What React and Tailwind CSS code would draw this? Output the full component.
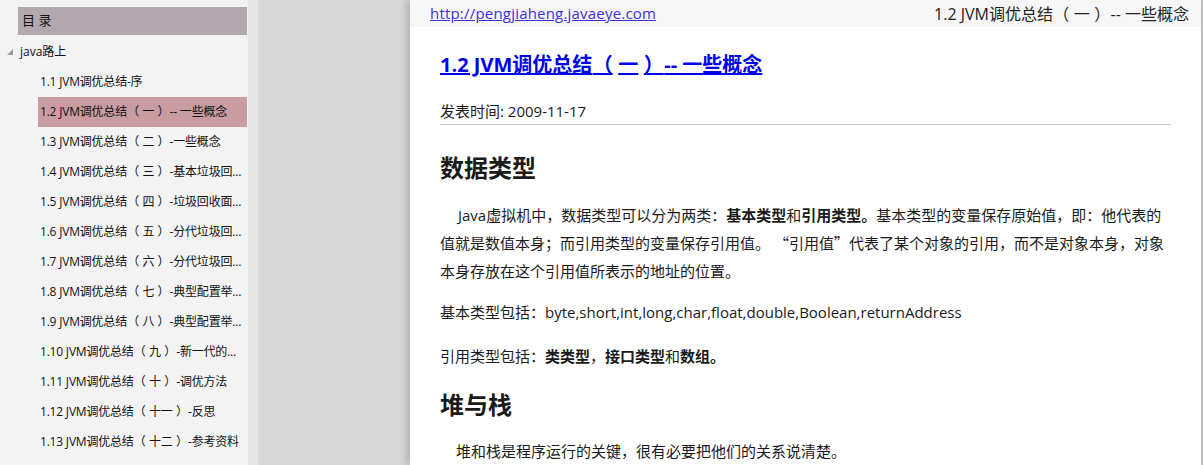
import React from "react";

const items = [
  "1.1 JVM调优总结-序",
  "1.2 JVM调优总结（一）-- 一些概念",
  "1.3 JVM调优总结（二）-一些概念",
  "1.4 JVM调优总结（三）-基本垃圾回...",
  "1.5 JVM调优总结（四）-垃圾回收面...",
  "1.6 JVM调优总结（五）-分代垃圾回...",
  "1.7 JVM调优总结（六）-分代垃圾回...",
  "1.8 JVM调优总结（七）-典型配置举...",
  "1.9 JVM调优总结（八）-典型配置举...",
  "1.10 JVM调优总结（九）-新一代的...",
  "1.11 JVM调优总结（十）-调优方法",
  "1.12 JVM调优总结（十一）-反思",
  "1.13 JVM调优总结（十二）-参考资料",
];

const font = { fontFamily: '"Open Sans", "Noto Sans CJK SC", sans-serif' };

function Cjk({ text }) {
  const parts = text.split(/([（）])/);
  return (
    <>
      {parts.map((p, i) =>
        p === "（" ? (
          <span key={i} className="pl-[0.02em] pr-[0.28em]">
            {p}
          </span>
        ) : p === "）" ? (
          <span key={i} className="pl-[0.28em] pr-[0.02em]">
            {p}
          </span>
        ) : (
          <React.Fragment key={i}>{p}</React.Fragment>
        )
      )}
    </>
  );
}

const Q = ({ children }) => (
  <span style={{ fontFamily: '"Noto Sans CJK SC", sans-serif' }}>{children}</span>
);

export default function App() {
  return (
    <div
      className="flex h-[465px] w-[1203px] overflow-hidden bg-[#d8d8d8] text-[#1a1a1a]"
      style={font}
    >
      <aside className="w-[248px] shrink-0 bg-[#f3f3f3] pt-[7px]">
        <div className="ml-[18px] mr-[1px] mb-[2px] flex h-[28px] items-center bg-[#b3a8ad] pl-[4px] text-[13px] text-[#111]">
          目 录
        </div>
        <div className="flex h-[30px] items-center pl-[7px] text-[12px] text-[#111]">
          <svg width="6" height="6" viewBox="0 0 6 6" className="mr-[7px]">
            <polygon points="6,0 6,6 0,6" fill="#9a9a9a" />
          </svg>
          java路上
        </div>
        {items.map((t, i) => (
          <div
            key={i}
            className={
              "ml-[38px] mr-[1px] flex h-[30px] items-center whitespace-nowrap pl-[2px] text-[12px] tracking-[-0.2px] text-[#111] " +
              (i === 1 ? "bg-[#c89ca0]" : "")
            }
          >
            <Cjk text={t} />
          </div>
        ))}
      </aside>
      <div className="w-[10px] shrink-0 bg-[#e6e6e6]" />
      <div className="w-[152px] shrink-0 bg-[#d8d8d8]" />
      <main className="relative w-[791px] shrink-0 bg-white shadow-[-4px_0_8px_rgba(0,0,0,0.18)]">
        <header className="flex h-[27px] items-center justify-between bg-[#f6f6f6] pl-[20px] pr-[12px]">
          <a className="text-[15px] tracking-[0.2px] text-[#3b2fe0] underline">http://pengjiaheng.javaeye.com</a>
          <span className="text-[16px] text-[#222]">
            <Cjk text="1.2 JVM调优总结（一）-- 一些概念" />
          </span>
        </header>
        <div className="px-[30px]">
          <h1 className="mt-[25px] text-[20px] font-bold leading-[26px] text-[#0000ee] underline">
            <Cjk text="1.2 JVM调优总结（一）-- 一些概念" />
          </h1>
          <div className="mt-[23px] border-b border-[#cccccc] pb-[3px] text-[15px] leading-[20px]">
            发表时间: 2009-11-17
          </div>
          <h2 className="mt-[28px] text-[24px] font-bold leading-[30px]">数据类型</h2>
          <p className="mt-[18px] text-[15px] leading-[28px] whitespace-nowrap">
            <span className="pl-[18px]" />
            Java虚拟机中，数据类型可以分为两类：<b>基本类型</b>和<b>引用类型。</b>基本类型的变量保存原始值，即：他代表的
            <br />
            值就是数值本身；而引用类型的变量保存引用值。 <Q>“</Q>引用值<Q>”</Q>代表了某个对象的引用，而不是对象本身，对象
            <br />
            本身存放在这个引用值所表示的地址的位置。
          </p>
          <p className="mt-[13px] text-[15px] leading-[28px]">
            基本类型包括：byte,short,int,long,char,float,double,Boolean,returnAddress
          </p>
          <p className="mt-[16px] text-[15px] leading-[28px]">
            引用类型包括：<b>类类型</b>，<b>接口类型</b>和<b>数组。</b>
          </p>
          <h2 className="mt-[20px] text-[24px] font-bold leading-[30px]">堆与栈</h2>
          <p className="mt-[17px] pl-[16px] text-[15px] leading-[28px]">
            堆和栈是程序运行的关键，很有必要把他们的关系说清楚。
          </p>
        </div>
      </main>
      <div className="w-[2px] shrink-0 bg-[#c2c2c2]" />
    </div>
  );
}
